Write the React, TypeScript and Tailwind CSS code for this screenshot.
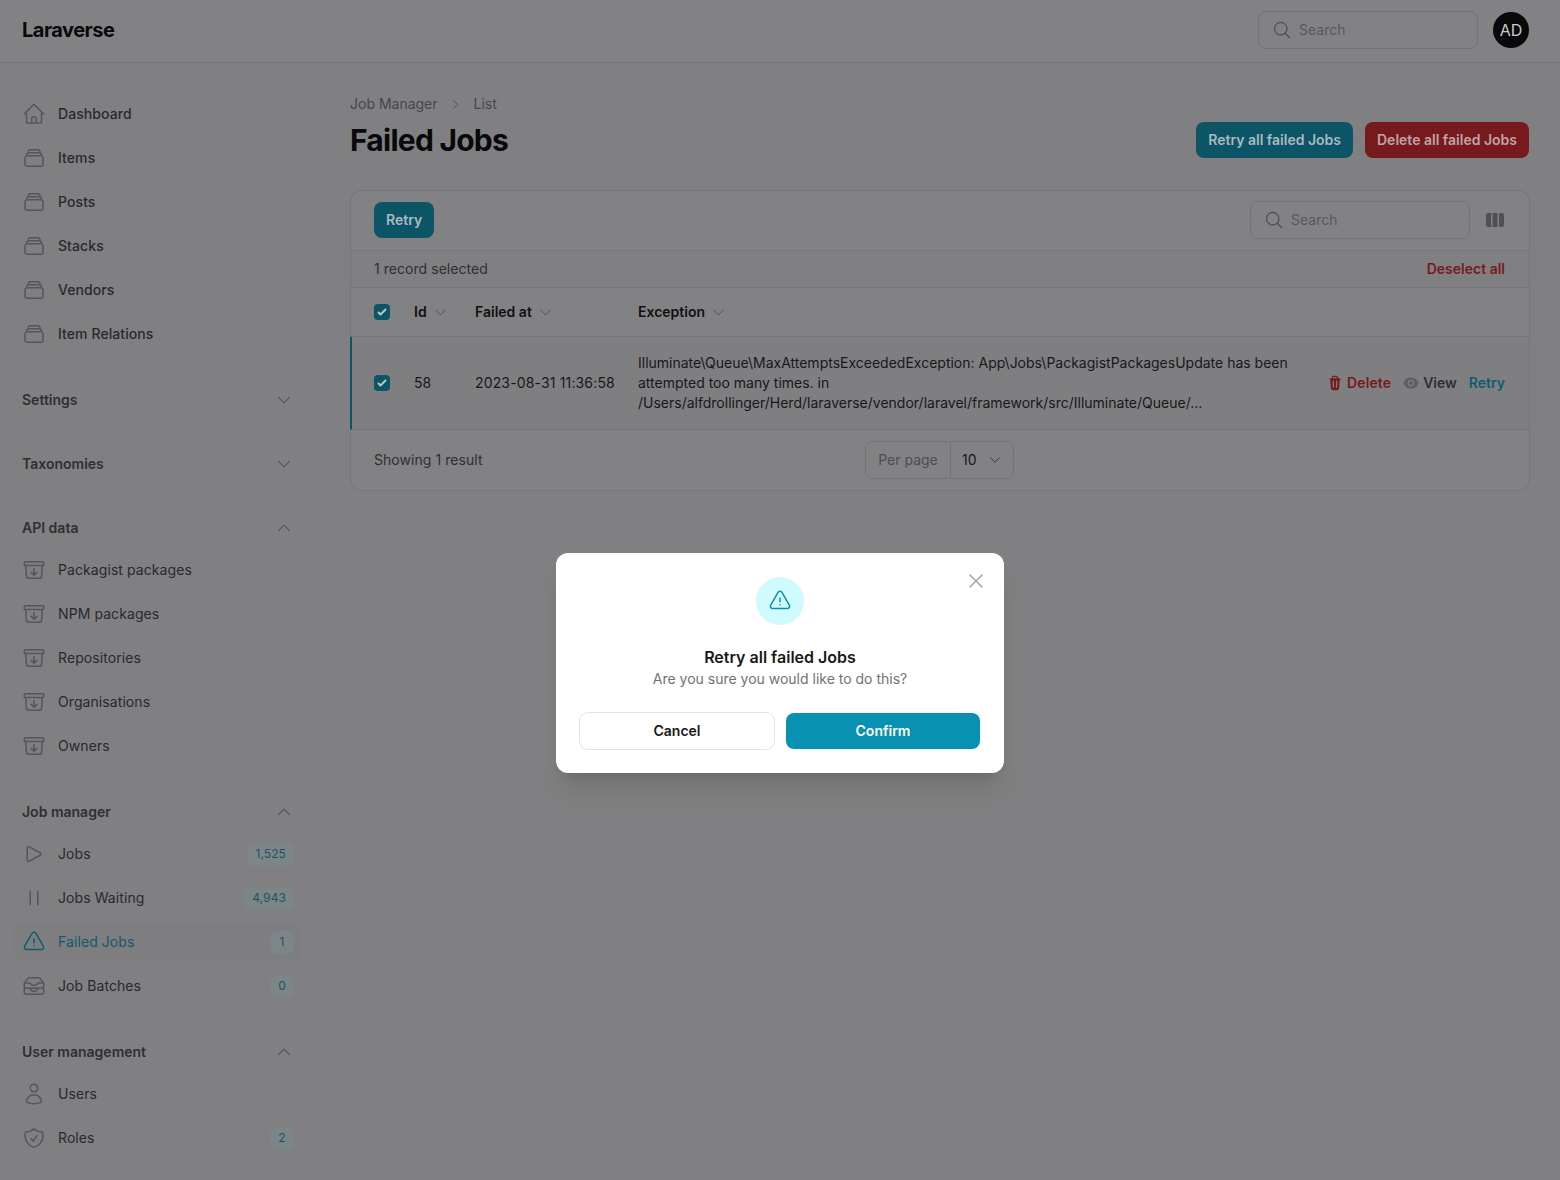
import type { ComponentType, ReactNode } from 'react';
import {
  HiMiniEye,
  HiMiniTrash,
  HiMiniViewColumns,
  HiOutlineArchiveBoxArrowDown,
  HiOutlineChevronDown,
  HiOutlineChevronRight,
  HiOutlineChevronUp,
  HiOutlineExclamationTriangle,
  HiOutlineHome,
  HiOutlineInboxStack,
  HiOutlineMagnifyingGlass,
  HiOutlinePause,
  HiOutlinePlay,
  HiOutlineRectangleStack,
  HiOutlineShieldCheck,
  HiOutlineUser,
  HiOutlineXMark,
} from 'react-icons/hi2';

type IconType = ComponentType<{ className?: string }>;

interface NavItem {
  label: string;
  icon: IconType;
  badge?: string;
  active?: boolean;
  medium?: boolean;
}

const topItems: NavItem[] = [
  { label: 'Dashboard', icon: HiOutlineHome, medium: true },
  { label: 'Items', icon: HiOutlineRectangleStack, medium: true },
  { label: 'Posts', icon: HiOutlineRectangleStack, medium: true },
  { label: 'Stacks', icon: HiOutlineRectangleStack, medium: true },
  { label: 'Vendors', icon: HiOutlineRectangleStack, medium: true },
  { label: 'Item Relations', icon: HiOutlineRectangleStack, medium: true },
];

const apiItems: NavItem[] = [
  { label: 'Packagist packages', icon: HiOutlineArchiveBoxArrowDown },
  { label: 'NPM packages', icon: HiOutlineArchiveBoxArrowDown },
  { label: 'Repositories', icon: HiOutlineArchiveBoxArrowDown },
  { label: 'Organisations', icon: HiOutlineArchiveBoxArrowDown },
  { label: 'Owners', icon: HiOutlineArchiveBoxArrowDown },
];

const jobItems: NavItem[] = [
  { label: 'Jobs', icon: HiOutlinePlay, badge: '1,525' },
  { label: 'Jobs Waiting', icon: HiOutlinePause, badge: '4,943' },
  { label: 'Failed Jobs', icon: HiOutlineExclamationTriangle, badge: '1', active: true },
  { label: 'Job Batches', icon: HiOutlineInboxStack, badge: '0' },
];

const userItems: NavItem[] = [
  { label: 'Users', icon: HiOutlineUser },
  { label: 'Roles', icon: HiOutlineShieldCheck, badge: '2' },
];

function SidebarLink({ item }: { item: NavItem }) {
  const Icon = item.icon;
  return (
    <a
      className={`flex h-9 items-center gap-3 rounded-lg px-2 text-sm tracking-[0.08px] ${
        item.active ? 'bg-[#7e7e80] text-[#12596b]' : 'text-[#29292c]'
      } ${item.medium ? 'font-medium' : 'font-normal'}`}
    >
      <Icon className={`size-6 shrink-0 ${item.active ? 'text-[#0e5c6f]' : 'text-[#55555a]'}`} />
      <span className="flex-1 truncate">{item.label}</span>
      {item.badge && (
        <span className="flex h-[23px] min-w-[24px] items-center justify-center rounded-md border border-[#78878a] bg-[#7d8587] px-[7px] text-xs font-normal tracking-[0.1px] text-[#15566a]">
          {item.badge}
        </span>
      )}
    </a>
  );
}

function SidebarGroup({ label, open, items }: { label: string; open: boolean; items?: NavItem[] }) {
  const Chevron = open ? HiOutlineChevronUp : HiOutlineChevronDown;
  return (
    <div className={open ? '' : 'pb-1'}>
      <div className="flex h-6 items-center justify-between pl-2 pr-[9px]">
        <span className="text-sm font-semibold text-[#2f2f33]">{label}</span>
        <Chevron className="size-[18px] text-[#55555a]" />
      </div>
      {items && (
        <div className="mt-3 flex flex-col gap-2">
          {items.map((item) => (
            <SidebarLink key={item.label} item={item} />
          ))}
        </div>
      )}
    </div>
  );
}

function SearchBox() {
  return (
    <div className="flex h-[38px] w-[220px] items-center gap-[7px] rounded-lg border border-[#737376] px-[13px]">
      <HiOutlineMagnifyingGlass className="size-[20px] text-[#4d4d51]" />
      <span className="text-sm text-[#58585c]">Search</span>
    </div>
  );
}

function Checkbox() {
  return (
    <span className="flex size-4 shrink-0 items-center justify-center rounded-[4px] bg-[#0b5567]">
      <svg viewBox="0 0 16 16" className="size-4 text-[#b8c4c8]" fill="currentColor">
        <path d="M12.207 4.793a1 1 0 0 1 0 1.414l-5 5a1 1 0 0 1-1.414 0l-2-2a1 1 0 0 1 1.414-1.414L6.5 9.086l4.293-4.293a1 1 0 0 1 1.414 0z" />
      </svg>
    </span>
  );
}

function HeadCell({ className, children }: { className: string; children: ReactNode }) {
  return (
    <div className={`flex shrink-0 items-center gap-[6px] text-sm font-semibold text-[#111113] ${className}`}>
      <span>{children}</span>
      <HiOutlineChevronDown className="size-[15px] text-[#505054]" />
    </div>
  );
}

function Sidebar() {
  return (
    <aside className="w-[316px] shrink-0 pl-[14px] pr-[14px] pt-[33px]">
      <nav className="flex flex-col gap-9">
        <div className="flex flex-col gap-2">
          {topItems.map((item) => (
            <SidebarLink key={item.label} item={item} />
          ))}
        </div>
        <SidebarGroup label="Settings" open={false} />
        <SidebarGroup label="Taxonomies" open={false} />
        <SidebarGroup label="API data" open items={apiItems} />
        <SidebarGroup label="Job manager" open items={jobItems} />
        <SidebarGroup label="User management" open items={userItems} />
      </nav>
    </aside>
  );
}

function JobsTable() {
  return (
    <div className="rounded-xl border border-[#767678] bg-[#828284]">
      <div className="flex h-[60px] items-center justify-between border-b border-[#767678] pb-[2px] pl-[23px] pr-6">
        <button className="h-9 rounded-lg bg-[#0b5567] px-3 text-sm font-semibold text-[#a9b9bf]">Retry</button>
        <div className="flex items-center gap-[15px]">
          <SearchBox />
          <HiMiniViewColumns className="size-5 text-[#505054]" />
        </div>
      </div>

      <div className="flex h-[37px] items-center justify-between border-b border-[#767678] bg-[#808082] pl-[23px] pr-6 text-sm">
        <span className="tracking-[0.05px] text-[#2f2f33]">1 record selected</span>
        <span className="font-semibold text-[#771a1e]">Deselect all</span>
      </div>

      <div className="flex h-[49px] items-center border-b border-[#767678] pl-[23px]">
        <Checkbox />
        <HeadCell className="ml-6 w-[61px]">Id</HeadCell>
        <HeadCell className="w-[163px]">Failed at</HeadCell>
        <HeadCell className="w-[200px]">Exception</HeadCell>
      </div>

      <div className="-ml-px flex h-[93px] items-center justify-between border-b border-l-2 border-[#767678] border-l-[#0b5567] bg-[#7f7f81] pl-[22px] pr-6 text-sm text-[#18181b]">
        <div className="flex items-center">
          <Checkbox />
          <span className="ml-6 w-[61px]">58</span>
          <span className="w-[163px] whitespace-nowrap tracking-[0.15px]">2023-08-31 11:36:58</span>
          <p className="leading-5 whitespace-nowrap">
            Illuminate\Queue\MaxAttemptsExceededException: App\Jobs\PackagistPackagesUpdate has been
            <br />
            attempted too many times. in
            <br />
            /Users/alfdrollinger/Herd/laraverse/vendor/laravel/framework/src/Illuminate/Queue/...
          </p>
        </div>
        <div className="flex items-center gap-3 text-sm font-semibold">
          <span className="flex items-center gap-1 tracking-[0.1px] text-[#771a1e]">
            <HiMiniTrash className="size-4 text-[#771a1e]" />
            Delete
          </span>
          <span className="flex items-center gap-1 text-[#2f2f33]">
            <HiMiniEye className="size-4 text-[#5f5f63]" />
            View
          </span>
          <span className="text-[#0e5c6f]">Retry</span>
        </div>
      </div>

      <div className="flex h-[60px] items-center pl-[23px] text-sm text-[#2f2f33]">
        <span className="w-[491px] tracking-[0.05px]">Showing 1 result</span>
        <div className="flex h-[38px] w-[149px] items-center rounded-lg border border-[#737376]">
          <span className="flex h-full w-[85px] items-center justify-center border-r border-[#737376] text-[#4d4d51]">
            Per page
          </span>
          <span className="flex flex-1 items-center gap-[11px] pl-[11px] text-[#18181b]">
            10
            <HiOutlineChevronDown className="size-[14px] text-[#2f2f33]" />
          </span>
        </div>
      </div>
    </div>
  );
}

function ConfirmModal() {
  return (
    <div className="absolute inset-0 flex items-start justify-center pt-[553px]">
      <div className="relative w-[448px] rounded-xl bg-white px-6 pb-6 pt-6 shadow-xl">
        <button className="absolute right-[16px] top-[16px] text-[#a1a1aa]">
          <HiOutlineXMark className="size-6" />
        </button>
        <div className="flex flex-col items-center">
          <div className="flex size-12 items-center justify-center rounded-full bg-[#cffafe]">
            <HiOutlineExclamationTriangle className="size-6 text-[#0891b2]" />
          </div>
          <h2 className="mt-5 text-base leading-6 font-semibold text-[#18181b]">Retry all failed Jobs</h2>
          <p className="text-sm leading-5 text-[#71717a]">Are you sure you would like to do this?</p>
        </div>
        <div className="mt-6 grid grid-cols-2 gap-3">
          <button className="h-9 rounded-lg bg-white text-sm font-semibold text-[#18181b] ring-1 ring-[#e4e4e7]">
            Cancel
          </button>
          <button className="h-9 rounded-lg bg-[#0891b2] text-sm font-semibold text-white">Confirm</button>
        </div>
      </div>
    </div>
  );
}

export default function App() {
  return (
    <div className="relative h-[1180px] overflow-hidden bg-[#808082] font-['Inter',sans-serif]">
      <header className="flex h-[63px] items-center justify-between border-b border-[#727274] bg-[#828284] pb-[2px] pl-[22px] pr-[31px]">
        <span className="text-xl font-bold tracking-tight text-[#09090b]">Laraverse</span>
        <div className="flex items-center gap-[15px]">
          <SearchBox />
          <span className="flex size-9 items-center justify-center rounded-full bg-[#09090b] text-base text-[#c9c9cb]">
            AD
          </span>
        </div>
      </header>

      <div className="flex">
        <Sidebar />
        <main className="ml-[34px] w-[1180px] pt-[31px]">
          <div className="flex items-center gap-[11.5px] text-sm text-[#47474b]">
            <span>Job Manager</span>
            <HiOutlineChevronRight className="size-[13px] text-[#47474b]" />
            <span>List</span>
          </div>
          <div className="mt-[8px] flex h-9 items-center justify-between pr-[1px]">
            <h1 className="text-3xl font-bold tracking-tight text-[#09090b]">Failed Jobs</h1>
            <div className="flex gap-3">
              <button className="h-9 rounded-lg bg-[#0b5567] px-3 text-sm font-semibold text-[#a9b9bf]">
                Retry all failed Jobs
              </button>
              <button className="h-9 rounded-lg bg-[#771a1e] px-3 text-sm font-semibold text-[#bfa3a5]">
                Delete all failed Jobs
              </button>
            </div>
          </div>
          <div className="mt-8">
            <JobsTable />
          </div>
        </main>
      </div>

      <ConfirmModal />
    </div>
  );
}
